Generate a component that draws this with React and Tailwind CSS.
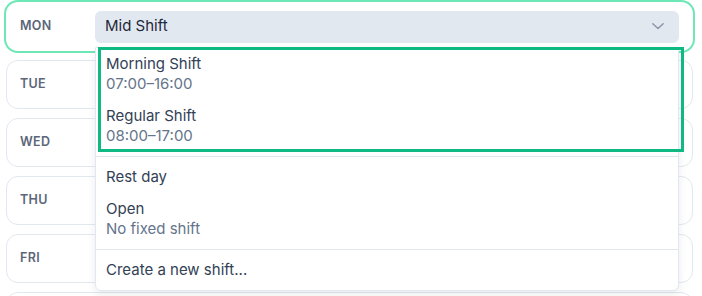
import React from 'react';

const days = ['MON', 'TUE', 'WED', 'THU', 'FRI', ''];

const presets = [
  { id: 'morning', label: 'Morning Shift', hours: '07:00–16:00' },
  { id: 'regular', label: 'Regular Shift', hours: '08:00–17:00' },
];

const others = [
  { id: 'rest', label: 'Rest day' },
  { id: 'open', label: 'Open', hours: 'No fixed shift' },
];

const Option = ({ label, hours }) => (
  <div className="px-[10px] py-[6px] leading-5 text-[15px]">
    <div className="text-[#334155]">{label}</div>
    {hours && <div className="text-[#64748b]">{hours}</div>}
  </div>
);

const Dropdown = () => (
  <div className="absolute left-0 right-0 top-[36px] z-10 rounded-b-md border border-[#e2e8f0] bg-white shadow-[0_4px_8px_rgba(15,23,42,0.08)]">
    <div className="relative pb-1">
      {presets.map(p => (
        <Option key={p.id} label={p.label} hours={p.hours} />
      ))}
      <div className="pointer-events-none absolute left-[2px] top-[-1px] h-[105px] w-[586px] border-[3px] border-[#10b981]" />
    </div>
    <div className="h-px bg-[#e2e8f0]" />
    <div className="py-1">
      {others.map(o => (
        <Option key={o.id} label={o.label} hours={o.hours} />
      ))}
    </div>
    <div className="h-px bg-[#e2e8f0]" />
    <div className="py-1">
      <Option label="Create a new shift..." />
    </div>
  </div>
);

const DayRow = ({ day, active }) => (
  <div
    className={`flex h-[49px] shrink-0 items-center rounded-xl border bg-white px-[13px] ${
      active ? 'relative z-10 border-transparent ring-2 ring-[#6ee7b7]' : 'border-[#e2e8f0]'
    }`}
  >
    <div className="w-[75px] text-[12.5px] font-semibold tracking-wide text-[#5b6679]">{day}</div>
    <div className="relative flex-1">
      <div className="flex h-8 items-center justify-between rounded-md bg-[#e2e8f0] pl-[10px] pr-[15px]">
        <span className="text-[15px] text-[#1e293b]">{active ? 'Mid Shift' : ''}</span>
        <svg width="12" height="7" viewBox="0 0 12 7" fill="none">
          <polyline points="0.8,0.8 6,5.6 11.2,0.8" stroke="#8b95a7" strokeWidth="1.4" strokeLinecap="round" strokeLinejoin="round" />
        </svg>
      </div>
      {active && <Dropdown />}
    </div>
  </div>
);

export default function App() {
  return (
    <div
      className="h-[296px] w-[702px] overflow-hidden bg-white pl-[6px] pr-[9px] pt-[2px]"
      style={{ fontFamily: 'Inter, "Noto Sans", sans-serif' }}
    >
      <div className="flex flex-col gap-[9px]">
        {days.map((d, i) => (
          <DayRow key={i} day={d} active={i === 0} />
        ))}
      </div>
    </div>
  );
}
